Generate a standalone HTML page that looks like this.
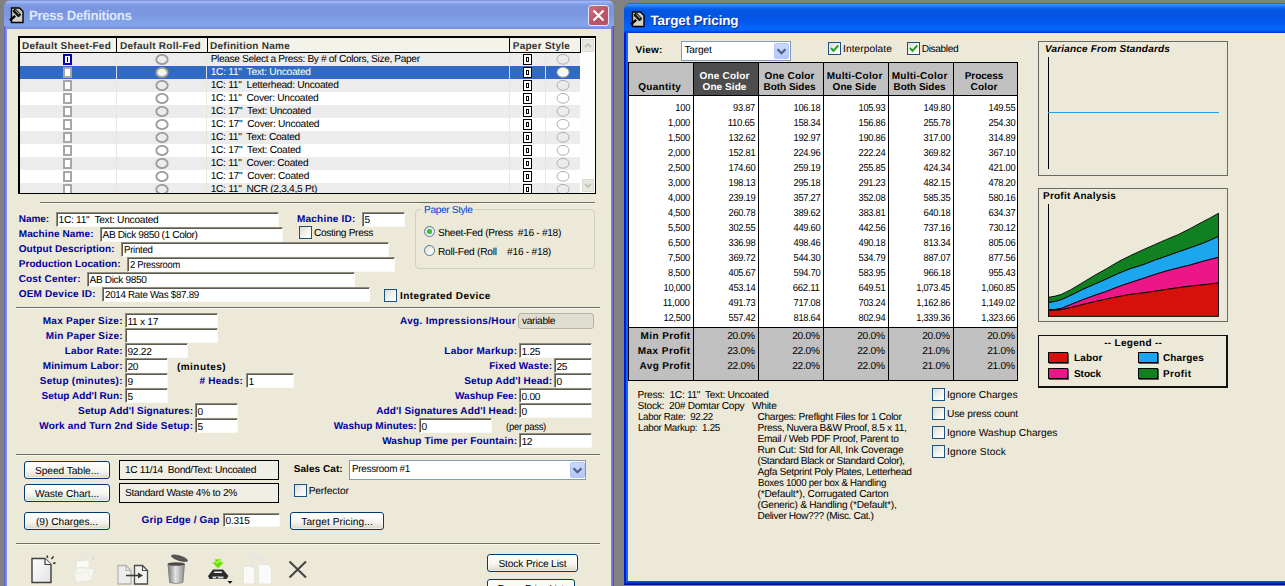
<!DOCTYPE html>
<html><head><meta charset="utf-8"><title>Press Definitions</title>
<style>
html,body{margin:0;padding:0}
body{width:1285px;height:586px;overflow:hidden;background:#818181;position:relative;font-family:'Liberation Sans','DejaVu Sans',sans-serif;font-size:10px;color:#000;text-rendering:geometricPrecision}
div{position:absolute;box-sizing:border-box}
svg{position:absolute;overflow:visible}
.t{white-space:pre}
.r{font-size:10.2px}
.w{font-size:10.2px;color:#fff}
.btn{font-size:10.2px}
.b{font-size:10px;font-weight:bold}
.n{font-size:10px;font-weight:bold;color:#00009c}
.h{font-size:10px;font-weight:bold;color:#333}
.hw{font-size:10px;font-weight:bold;color:#fff}
.bi{font-size:10px;font-weight:bold;font-style:italic}
.t.t13{font-size:13px}
.tt{font-size:13.5px;font-weight:bold}
.inp{background:#fff;border:1px solid;border-color:#8f8d7f #faf9f2 #faf9f2 #8f8d7f;box-shadow:inset 1px 1px 0 #5c5a50}
.xpb{border:1px solid #003c74;border-radius:3px;background:linear-gradient(#fff 0,#f6f5f0 55%,#e4e1d4 88%,#d0cdbf 100%);box-shadow:inset 0 0 0 1px rgba(255,255,255,.6)}
.cb{width:13px;height:13px;border:1px solid #1c5180;background:linear-gradient(135deg,#dcdcd6 0,#f3f3ef 55%,#fff 100%)}
.rd{border:1px solid #52779c;border-radius:50%;background:linear-gradient(135deg,#dcdcd6 0,#f3f3ef 55%,#fff 100%)}
.cmb{background:#fff;border:1px solid #7f9db9}
.cmbb{background:linear-gradient(#cad8fb,#b4c8f6);border:1px solid #b7c6f0;border-radius:2px}
.ln{height:2px;border-top:1px solid #6d6d63;border-bottom:1px solid #f8f7ee}
</style></head>
<body>
<div style="left:4px;top:0px;width:610px;height:600px;background:#7b8fdd;border-radius:7px 7px 0 0"></div>
<div style="left:4px;top:0px;width:610px;height:29px;border-radius:7px 7px 0 0;background:linear-gradient(#6c88d6 0,#a2b6f2 5%,#9cb2f0 8%,#82a2e8 13%,#7b95e0 22%,#7b96e0 50%,#7f9ee5 65%,#82a6ea 88%,#7e98e4 94%,#7884de 100%)"></div>
<div style="left:7px;top:29px;width:604px;height:560px;background:#ece9d8"></div>
<div style="left:4px;top:26px;width:1px;height:580px;background:#6064c4"></div>
<div style="left:5px;top:26px;width:1px;height:580px;background:#7a80dc"></div>
<div style="left:6px;top:26px;width:1px;height:580px;background:#8890e6"></div>
<div style="left:611px;top:26px;width:1px;height:580px;background:#8484e2"></div>
<div style="left:612px;top:26px;width:1px;height:580px;background:#7070d2"></div>
<div style="left:613px;top:26px;width:1px;height:580px;background:#5454b6"></div>
<svg style="left:9px;top:7px" width="15" height="17" viewBox="0 0 15 17"><path d="M2.500 1h8l3.500 3.500v11h-11.500z" fill="#d4d0c8" stroke="#000" stroke-width="1.400"/><g transform="rotate(45 7.900 5.800)"><rect x="3.400" y="3.800" width="9" height="4.200" rx="1.200" fill="#151515"/><rect x="5" y="4.600" width="5.500" height="1" fill="#a8a8a8"/></g><path d="M6.200 8.800l-5.300 4.600" stroke="#000" stroke-width="2.400"/></svg>
<div class="t tt" style="left:28.50px;top:7px;line-height:18px;letter-spacing:-0.300px;transform:scaleX(0.975);transform-origin:0 50%;color:#dfe8fa;font-weight:bold">Press Definitions</div>
<div style="left:588px;top:5px;width:21px;height:21px;border:1px solid #e4e4f4;border-radius:3px;background:linear-gradient(135deg,#cf7080,#bd5568 50%,#b8506a)"></div>
<svg style="left:588px;top:5px" width="21" height="21"><path d="M5.5 5.5l10 10M15.5 5.5l-10 10" stroke="#fff" stroke-width="2.2" stroke-linecap="butt"/></svg>
<div style="left:18px;top:36px;width:578px;height:158px;background:#000"></div>
<div style="left:20px;top:38px;width:575px;height:155px;background:#fff"></div>
<div style="left:20px;top:38px;width:560px;height:14px;background:#f4f3ea"></div>
<div style="left:20px;top:52px;width:561px;height:1px;background:#000"></div>
<div style="left:116px;top:38px;width:1px;height:14px;background:#000"></div>
<div style="left:207px;top:38px;width:1px;height:14px;background:#000"></div>
<div style="left:509px;top:38px;width:1px;height:14px;background:#000"></div>
<div style="left:580px;top:38px;width:1px;height:15px;background:#000"></div>
<div class="t h" style="left:22.00px;top:40px;line-height:14px;letter-spacing:0.234px;">Default Sheet-Fed</div>
<div class="t h" style="left:120.00px;top:40px;line-height:14px;letter-spacing:0.271px;">Default Roll-Fed</div>
<div class="t h" style="left:210.00px;top:40px;line-height:14px;letter-spacing:0.258px;">Definition Name</div>
<div class="t h" style="left:512.70px;top:40px;line-height:14px;letter-spacing:0.274px;">Paper Style</div>
<div style="left:581px;top:38px;width:14px;height:155px;background:#fdfdfb"></div>
<div style="left:582px;top:39px;width:12px;height:13px;background:#e9e8e0;border:1px solid #dcdbd2"></div>
<svg style="left:582px;top:39px" width="12" height="13"><path d="M3 8l3-3 3 3" fill="none" stroke="#c2c1b6" stroke-width="1.8"/></svg>
<div style="left:582px;top:179px;width:12px;height:13px;background:#e9e8e0;border:1px solid #dcdbd2"></div>
<svg style="left:582px;top:179px" width="12" height="13"><path d="M3 5l3 3 3-3" fill="none" stroke="#c2c1b6" stroke-width="1.8"/></svg>
<div style="left:20px;top:53px;width:560px;height:13px;background:#ececec"></div>
<div style="left:116px;top:53px;width:1px;height:13px;background:#e9e6da"></div>
<div style="left:206px;top:53px;width:1px;height:13px;background:#e9e6da"></div>
<div style="left:509px;top:53px;width:1px;height:13px;background:#e9e6da"></div>
<div style="left:545px;top:53px;width:1px;height:13px;background:#e9e6da"></div>
<div style="left:63px;top:54px;width:9px;height:11px;border:2px solid #0000c8;background:#fff"></div>
<div style="left:67px;top:57px;width:1px;height:5px;background:#000"></div>
<svg style="left:155px;top:54px;overflow:hidden" width="14" height="11" viewBox="0 0 14 11"><ellipse cx="7" cy="5.5" rx="5.7" ry="4.6" fill="none" stroke="#9e9e9e" stroke-width="1.9"/></svg>
<div style="left:523px;top:54px;width:9px;height:11px;border:1px solid #000;background:#fff;"></div>
<div style="left:526px;top:57px;width:3px;height:5px;border:1px solid #000;"></div>
<svg style="left:556px;top:54px;overflow:hidden" width="14" height="11" viewBox="0 0 14 11"><ellipse cx="7" cy="5.3" rx="6" ry="4.9" fill="none" stroke="#adadad" stroke-width="1"/></svg>
<div class="t r" style="left:210.70px;top:53px;line-height:14px;letter-spacing:-0.373px;">Please Select a Press: By # of Colors, Size, Paper</div>
<div style="left:20px;top:66px;width:560px;height:13px;background:#316ac5"></div>
<div style="left:116px;top:66px;width:1px;height:13px;background:#d8dcea"></div>
<div style="left:206px;top:66px;width:1px;height:13px;background:#d8dcea"></div>
<div style="left:509px;top:66px;width:1px;height:13px;background:#d8dcea"></div>
<div style="left:545px;top:66px;width:1px;height:13px;background:#d8dcea"></div>
<div style="left:63px;top:67px;width:9px;height:11px;border:2px solid #a6a6a6;background:#fff;"></div>
<svg style="left:155px;top:67px;overflow:hidden" width="14" height="11" viewBox="0 0 14 11"><ellipse cx="7" cy="5.5" rx="5.7" ry="4.6" fill="#f4f4f0" stroke="#9e9e9e" stroke-width="1.9"/></svg>
<div style="left:523px;top:67px;width:9px;height:11px;border:1px solid #000;background:#fff;"></div>
<div style="left:526px;top:70px;width:3px;height:5px;border:1px solid #000;"></div>
<svg style="left:556px;top:67px;overflow:hidden" width="14" height="11" viewBox="0 0 14 11"><ellipse cx="7" cy="5.3" rx="6" ry="4.9" fill="#f8f8f4" stroke="#adadad" stroke-width="1"/></svg>
<div class="t w" style="left:210.70px;top:66px;line-height:14px;letter-spacing:-0.274px;">1C: 11"  Text: Uncoated</div>
<div style="left:20px;top:79px;width:560px;height:13px;background:#ececec"></div>
<div style="left:116px;top:79px;width:1px;height:13px;background:#e9e6da"></div>
<div style="left:206px;top:79px;width:1px;height:13px;background:#e9e6da"></div>
<div style="left:509px;top:79px;width:1px;height:13px;background:#e9e6da"></div>
<div style="left:545px;top:79px;width:1px;height:13px;background:#e9e6da"></div>
<div style="left:63px;top:80px;width:9px;height:11px;border:2px solid #a6a6a6;background:#fff;"></div>
<svg style="left:155px;top:80px;overflow:hidden" width="14" height="11" viewBox="0 0 14 11"><ellipse cx="7" cy="5.5" rx="5.7" ry="4.6" fill="none" stroke="#9e9e9e" stroke-width="1.9"/></svg>
<div style="left:523px;top:80px;width:9px;height:11px;border:1px solid #000;background:#fff;"></div>
<div style="left:526px;top:83px;width:3px;height:5px;border:1px solid #000;"></div>
<svg style="left:556px;top:80px;overflow:hidden" width="14" height="11" viewBox="0 0 14 11"><ellipse cx="7" cy="5.3" rx="6" ry="4.9" fill="none" stroke="#adadad" stroke-width="1"/></svg>
<div class="t r" style="left:210.70px;top:79px;line-height:14px;letter-spacing:-0.300px;">1C: 11"  Letterhead: Uncoated</div>
<div style="left:20px;top:92px;width:560px;height:13px;background:#fff"></div>
<div style="left:116px;top:92px;width:1px;height:13px;background:#e9e6da"></div>
<div style="left:206px;top:92px;width:1px;height:13px;background:#e9e6da"></div>
<div style="left:509px;top:92px;width:1px;height:13px;background:#e9e6da"></div>
<div style="left:545px;top:92px;width:1px;height:13px;background:#e9e6da"></div>
<div style="left:63px;top:93px;width:9px;height:11px;border:2px solid #a6a6a6;background:#fff;"></div>
<svg style="left:155px;top:93px;overflow:hidden" width="14" height="11" viewBox="0 0 14 11"><ellipse cx="7" cy="5.5" rx="5.7" ry="4.6" fill="none" stroke="#9e9e9e" stroke-width="1.9"/></svg>
<div style="left:523px;top:93px;width:9px;height:11px;border:1px solid #000;background:#fff;"></div>
<div style="left:526px;top:96px;width:3px;height:5px;border:1px solid #000;"></div>
<svg style="left:556px;top:93px;overflow:hidden" width="14" height="11" viewBox="0 0 14 11"><ellipse cx="7" cy="5.3" rx="6" ry="4.9" fill="none" stroke="#adadad" stroke-width="1"/></svg>
<div class="t r" style="left:210.70px;top:92px;line-height:14px;letter-spacing:-0.300px;">1C: 11"  Cover: Uncoated</div>
<div style="left:20px;top:105px;width:560px;height:13px;background:#ececec"></div>
<div style="left:116px;top:105px;width:1px;height:13px;background:#e9e6da"></div>
<div style="left:206px;top:105px;width:1px;height:13px;background:#e9e6da"></div>
<div style="left:509px;top:105px;width:1px;height:13px;background:#e9e6da"></div>
<div style="left:545px;top:105px;width:1px;height:13px;background:#e9e6da"></div>
<div style="left:63px;top:106px;width:9px;height:11px;border:2px solid #a6a6a6;background:#fff;"></div>
<svg style="left:155px;top:106px;overflow:hidden" width="14" height="11" viewBox="0 0 14 11"><ellipse cx="7" cy="5.5" rx="5.7" ry="4.6" fill="none" stroke="#9e9e9e" stroke-width="1.9"/></svg>
<div style="left:523px;top:106px;width:9px;height:11px;border:1px solid #000;background:#fff;"></div>
<div style="left:526px;top:109px;width:3px;height:5px;border:1px solid #000;"></div>
<svg style="left:556px;top:106px;overflow:hidden" width="14" height="11" viewBox="0 0 14 11"><ellipse cx="7" cy="5.3" rx="6" ry="4.9" fill="none" stroke="#adadad" stroke-width="1"/></svg>
<div class="t r" style="left:210.70px;top:105px;line-height:14px;letter-spacing:-0.300px;">1C: 17"  Text: Uncoated</div>
<div style="left:20px;top:118px;width:560px;height:13px;background:#fff"></div>
<div style="left:116px;top:118px;width:1px;height:13px;background:#e9e6da"></div>
<div style="left:206px;top:118px;width:1px;height:13px;background:#e9e6da"></div>
<div style="left:509px;top:118px;width:1px;height:13px;background:#e9e6da"></div>
<div style="left:545px;top:118px;width:1px;height:13px;background:#e9e6da"></div>
<div style="left:63px;top:119px;width:9px;height:11px;border:2px solid #a6a6a6;background:#fff;"></div>
<svg style="left:155px;top:119px;overflow:hidden" width="14" height="11" viewBox="0 0 14 11"><ellipse cx="7" cy="5.5" rx="5.7" ry="4.6" fill="none" stroke="#9e9e9e" stroke-width="1.9"/></svg>
<div style="left:523px;top:119px;width:9px;height:11px;border:1px solid #000;background:#fff;"></div>
<div style="left:526px;top:122px;width:3px;height:5px;border:1px solid #000;"></div>
<svg style="left:556px;top:119px;overflow:hidden" width="14" height="11" viewBox="0 0 14 11"><ellipse cx="7" cy="5.3" rx="6" ry="4.9" fill="none" stroke="#adadad" stroke-width="1"/></svg>
<div class="t r" style="left:210.70px;top:118px;line-height:14px;letter-spacing:-0.300px;">1C: 17"  Cover: Uncoated</div>
<div style="left:20px;top:131px;width:560px;height:13px;background:#ececec"></div>
<div style="left:116px;top:131px;width:1px;height:13px;background:#e9e6da"></div>
<div style="left:206px;top:131px;width:1px;height:13px;background:#e9e6da"></div>
<div style="left:509px;top:131px;width:1px;height:13px;background:#e9e6da"></div>
<div style="left:545px;top:131px;width:1px;height:13px;background:#e9e6da"></div>
<div style="left:63px;top:132px;width:9px;height:11px;border:2px solid #a6a6a6;background:#fff;"></div>
<svg style="left:155px;top:132px;overflow:hidden" width="14" height="11" viewBox="0 0 14 11"><ellipse cx="7" cy="5.5" rx="5.7" ry="4.6" fill="none" stroke="#9e9e9e" stroke-width="1.9"/></svg>
<div style="left:523px;top:132px;width:9px;height:11px;border:1px solid #000;background:#fff;"></div>
<div style="left:526px;top:135px;width:3px;height:5px;border:1px solid #000;"></div>
<svg style="left:556px;top:132px;overflow:hidden" width="14" height="11" viewBox="0 0 14 11"><ellipse cx="7" cy="5.3" rx="6" ry="4.9" fill="none" stroke="#adadad" stroke-width="1"/></svg>
<div class="t r" style="left:210.70px;top:131px;line-height:14px;letter-spacing:-0.300px;">1C: 11"  Text: Coated</div>
<div style="left:20px;top:144px;width:560px;height:13px;background:#fff"></div>
<div style="left:116px;top:144px;width:1px;height:13px;background:#e9e6da"></div>
<div style="left:206px;top:144px;width:1px;height:13px;background:#e9e6da"></div>
<div style="left:509px;top:144px;width:1px;height:13px;background:#e9e6da"></div>
<div style="left:545px;top:144px;width:1px;height:13px;background:#e9e6da"></div>
<div style="left:63px;top:145px;width:9px;height:11px;border:2px solid #a6a6a6;background:#fff;"></div>
<svg style="left:155px;top:145px;overflow:hidden" width="14" height="11" viewBox="0 0 14 11"><ellipse cx="7" cy="5.5" rx="5.7" ry="4.6" fill="none" stroke="#9e9e9e" stroke-width="1.9"/></svg>
<div style="left:523px;top:145px;width:9px;height:11px;border:1px solid #000;background:#fff;"></div>
<div style="left:526px;top:148px;width:3px;height:5px;border:1px solid #000;"></div>
<svg style="left:556px;top:145px;overflow:hidden" width="14" height="11" viewBox="0 0 14 11"><ellipse cx="7" cy="5.3" rx="6" ry="4.9" fill="none" stroke="#adadad" stroke-width="1"/></svg>
<div class="t r" style="left:210.70px;top:144px;line-height:14px;letter-spacing:-0.300px;">1C: 17"  Text: Coated</div>
<div style="left:20px;top:157px;width:560px;height:13px;background:#ececec"></div>
<div style="left:116px;top:157px;width:1px;height:13px;background:#e9e6da"></div>
<div style="left:206px;top:157px;width:1px;height:13px;background:#e9e6da"></div>
<div style="left:509px;top:157px;width:1px;height:13px;background:#e9e6da"></div>
<div style="left:545px;top:157px;width:1px;height:13px;background:#e9e6da"></div>
<div style="left:63px;top:158px;width:9px;height:11px;border:2px solid #a6a6a6;background:#fff;"></div>
<svg style="left:155px;top:158px;overflow:hidden" width="14" height="11" viewBox="0 0 14 11"><ellipse cx="7" cy="5.5" rx="5.7" ry="4.6" fill="none" stroke="#9e9e9e" stroke-width="1.9"/></svg>
<div style="left:523px;top:158px;width:9px;height:11px;border:1px solid #000;background:#fff;"></div>
<div style="left:526px;top:161px;width:3px;height:5px;border:1px solid #000;"></div>
<svg style="left:556px;top:158px;overflow:hidden" width="14" height="11" viewBox="0 0 14 11"><ellipse cx="7" cy="5.3" rx="6" ry="4.9" fill="none" stroke="#adadad" stroke-width="1"/></svg>
<div class="t r" style="left:210.70px;top:157px;line-height:14px;letter-spacing:-0.300px;">1C: 11"  Cover: Coated</div>
<div style="left:20px;top:170px;width:560px;height:13px;background:#fff"></div>
<div style="left:116px;top:170px;width:1px;height:13px;background:#e9e6da"></div>
<div style="left:206px;top:170px;width:1px;height:13px;background:#e9e6da"></div>
<div style="left:509px;top:170px;width:1px;height:13px;background:#e9e6da"></div>
<div style="left:545px;top:170px;width:1px;height:13px;background:#e9e6da"></div>
<div style="left:63px;top:171px;width:9px;height:11px;border:2px solid #a6a6a6;background:#fff;"></div>
<svg style="left:155px;top:171px;overflow:hidden" width="14" height="11" viewBox="0 0 14 11"><ellipse cx="7" cy="5.5" rx="5.7" ry="4.6" fill="none" stroke="#9e9e9e" stroke-width="1.9"/></svg>
<div style="left:523px;top:171px;width:9px;height:11px;border:1px solid #000;background:#fff;"></div>
<div style="left:526px;top:174px;width:3px;height:5px;border:1px solid #000;"></div>
<svg style="left:556px;top:171px;overflow:hidden" width="14" height="11" viewBox="0 0 14 11"><ellipse cx="7" cy="5.3" rx="6" ry="4.9" fill="none" stroke="#adadad" stroke-width="1"/></svg>
<div class="t r" style="left:210.70px;top:170px;line-height:14px;letter-spacing:-0.300px;">1C: 17"  Cover: Coated</div>
<div style="left:20px;top:183px;width:560px;height:10px;background:#ececec"></div>
<div style="left:116px;top:183px;width:1px;height:10px;background:#e9e6da"></div>
<div style="left:206px;top:183px;width:1px;height:10px;background:#e9e6da"></div>
<div style="left:509px;top:183px;width:1px;height:10px;background:#e9e6da"></div>
<div style="left:545px;top:183px;width:1px;height:10px;background:#e9e6da"></div>
<div style="left:63px;top:184px;width:9px;height:9px;border:2px solid #a6a6a6;background:#fff;border-bottom:none;"></div>
<svg style="left:155px;top:184px;overflow:hidden" width="14" height="9" viewBox="0 0 14 9"><ellipse cx="7" cy="5.5" rx="5.7" ry="4.6" fill="none" stroke="#9e9e9e" stroke-width="1.9"/></svg>
<div style="left:523px;top:184px;width:9px;height:9px;border:1px solid #000;background:#fff;border-bottom:none;"></div>
<div style="left:526px;top:187px;width:3px;height:5px;border:1px solid #000;"></div>
<svg style="left:556px;top:184px;overflow:hidden" width="14" height="9" viewBox="0 0 14 9"><ellipse cx="7" cy="5.3" rx="6" ry="4.9" fill="none" stroke="#adadad" stroke-width="1"/></svg>
<div style="left:208px;top:183px;width:300px;height:10px;overflow:hidden"><div class="t r" style="left:2.7px;top:0px;line-height:14px;letter-spacing:-0.3px">1C: 11"  NCR (2,3,4,5 Pt)</div></div>
<div class="ln" style="left:40px;top:202px;width:555px;height:2px;"></div>
<div class="ln" style="left:16px;top:307px;width:584px;height:2px;"></div>
<div class="ln" style="left:16px;top:454px;width:584px;height:2px;"></div>
<div class="ln" style="left:16px;top:543px;width:584px;height:2px;"></div>
<div class="t n" style="left:18.70px;top:213px;line-height:14px;letter-spacing:-0.016px;">Name:</div>
<div class="inp" style="left:56px;top:212px;width:223px;height:15px;"></div>
<div class="t r" style="left:58.50px;top:214px;line-height:14px;letter-spacing:-0.274px;">1C: 11"  Text: Uncoated</div>
<div class="t n" style="left:18.70px;top:228px;line-height:14px;letter-spacing:0.126px;">Machine Name:</div>
<div class="inp" style="left:100px;top:227px;width:183px;height:15px;"></div>
<div class="t r" style="left:102.50px;top:229px;line-height:14px;letter-spacing:-0.418px;">AB Dick 9850 (1 Color)</div>
<div class="t n" style="left:18.70px;top:243px;line-height:14px;letter-spacing:0.111px;">Output Description:</div>
<div class="inp" style="left:121px;top:242px;width:268px;height:15px;"></div>
<div class="t r" style="left:123.50px;top:244px;line-height:14px;letter-spacing:-0.300px;transform:scaleX(0.951);transform-origin:0 50%;">Printed</div>
<div class="t n" style="left:18.70px;top:258px;line-height:14px;letter-spacing:0.073px;">Production Location:</div>
<div class="inp" style="left:127px;top:257px;width:268px;height:15px;"></div>
<div class="t r" style="left:129.50px;top:259px;line-height:14px;letter-spacing:-0.300px;transform:scaleX(0.918);transform-origin:0 50%;">2 Pressroom</div>
<div class="t n" style="left:18.70px;top:273px;line-height:14px;letter-spacing:0.165px;">Cost Center:</div>
<div class="inp" style="left:87px;top:272px;width:268px;height:15px;"></div>
<div class="t r" style="left:89.50px;top:274px;line-height:14px;letter-spacing:-0.395px;">AB Dick 9850</div>
<div class="t n" style="left:18.70px;top:288px;line-height:14px;letter-spacing:0.220px;">OEM Device ID:</div>
<div class="inp" style="left:102px;top:287px;width:268px;height:15px;"></div>
<div class="t r" style="left:104.50px;top:289px;line-height:14px;letter-spacing:-0.300px;transform:scaleX(0.961);transform-origin:0 50%;">2014 Rate Was $87.89</div>
<div class="t n" style="left:297.00px;top:213px;line-height:14px;letter-spacing:0.216px;">Machine ID:</div>
<div class="inp" style="left:362px;top:212px;width:43px;height:15px;"></div>
<div class="t r" style="left:364.50px;top:214px;line-height:14px;letter-spacing:-0.300px;">5</div>
<div class="cb" style="left:299px;top:226px;width:13px;height:13px;"></div>
<div class="t r" style="left:314.00px;top:227px;line-height:14px;letter-spacing:-0.340px;">Costing Press</div>
<div class="cb" style="left:384px;top:289px;width:13px;height:13px;"></div>
<div class="t b" style="left:400.00px;top:290px;line-height:14px;letter-spacing:0.431px;">Integrated Device</div>
<div style="left:415px;top:209px;width:180px;height:60px;border:1px solid #d0d0bf;border-radius:4px"></div>
<div style="left:421px;top:203px;width:54px;height:12px;background:#ece9d8"></div>
<div class="t r" style="left:424.00px;top:204px;line-height:14px;letter-spacing:-0.379px;color:#0046d5">Paper Style</div>
<div class="rd" style="left:424px;top:226px;width:11px;height:11px;"></div>
<div style="left:427px;top:229px;width:5px;height:5px;border-radius:50%;background:radial-gradient(#3fd03f,#22a022)"></div>
<div class="t r" style="left:438.00px;top:227px;line-height:14px;letter-spacing:-0.319px;">Sheet-Fed (Press  #16 - #18)</div>
<div class="rd" style="left:424px;top:245px;width:11px;height:11px;"></div>
<div class="t r" style="left:438.00px;top:246px;line-height:14px;letter-spacing:-0.252px;">Roll-Fed (Roll    #16 - #18)</div>
<div class="t n" style="left:42.76px;top:315px;line-height:14px;letter-spacing:0.256px;">Max Paper Size:</div>
<div class="inp" style="left:125px;top:313px;width:93px;height:15px;"></div>
<div class="t r" style="left:127.50px;top:316px;line-height:14px;letter-spacing:-0.300px;">11 x 17</div>
<div class="t n" style="left:45.71px;top:330px;line-height:14px;letter-spacing:0.206px;">Min Paper Size:</div>
<div class="inp" style="left:125px;top:328px;width:93px;height:15px;"></div>
<div class="t n" style="left:64.72px;top:345px;line-height:14px;letter-spacing:0.222px;">Labor Rate:</div>
<div class="inp" style="left:125px;top:343px;width:63px;height:15px;"></div>
<div class="t r" style="left:127.50px;top:346px;line-height:14px;letter-spacing:-0.300px;">92.22</div>
<div class="t n" style="left:42.66px;top:360px;line-height:14px;letter-spacing:0.158px;">Minimum Labor:</div>
<div class="inp" style="left:125px;top:358px;width:43px;height:15px;"></div>
<div class="t r" style="left:127.50px;top:361px;line-height:14px;letter-spacing:-0.300px;">20</div>
<div class="t b" style="left:177.00px;top:361px;line-height:14px;letter-spacing:0.444px;">(minutes)</div>
<div class="t n" style="left:39.76px;top:375px;line-height:14px;letter-spacing:0.257px;">Setup (minutes):</div>
<div class="inp" style="left:125px;top:373px;width:43px;height:15px;"></div>
<div class="t r" style="left:127.50px;top:376px;line-height:14px;letter-spacing:-0.300px;">9</div>
<div class="t n" style="left:199.50px;top:375px;line-height:14px;letter-spacing:0.227px;"># Heads:</div>
<div class="inp" style="left:246px;top:373px;width:48px;height:15px;"></div>
<div class="t r" style="left:248.50px;top:376px;line-height:14px;letter-spacing:-0.300px;">1</div>
<div class="t n" style="left:41.54px;top:390px;line-height:14px;letter-spacing:0.042px;">Setup Add'l Run:</div>
<div class="inp" style="left:125px;top:388px;width:43px;height:15px;"></div>
<div class="t r" style="left:127.50px;top:391px;line-height:14px;letter-spacing:-0.300px;">5</div>
<div class="t n" style="left:78.11px;top:405px;line-height:14px;letter-spacing:0.105px;">Setup Add'l Signatures:</div>
<div class="inp" style="left:195px;top:403px;width:43px;height:15px;"></div>
<div class="t r" style="left:197.50px;top:406px;line-height:14px;letter-spacing:-0.300px;">0</div>
<div class="t n" style="left:39.21px;top:420px;line-height:14px;letter-spacing:0.208px;">Work and Turn 2nd Side Setup:</div>
<div class="inp" style="left:195px;top:418px;width:43px;height:15px;"></div>
<div class="t r" style="left:197.50px;top:421px;line-height:14px;letter-spacing:-0.300px;">5</div>
<div class="t n" style="left:400.00px;top:315px;line-height:14px;letter-spacing:0.328px;">Avg. Impressions/Hour</div>
<div style="left:518px;top:313px;width:76px;height:16px;border:1px solid #b5b3a6;border-radius:3px;background:#dfddd0"></div>
<div class="t r" style="left:522.00px;top:315px;line-height:14px;letter-spacing:-0.336px;">variable</div>
<div class="t n" style="left:444.27px;top:345px;line-height:14px;letter-spacing:0.273px;">Labor Markup:</div>
<div class="inp" style="left:519px;top:343px;width:73px;height:15px;"></div>
<div class="t r" style="left:521.50px;top:346px;line-height:14px;letter-spacing:-0.300px;">1.25</div>
<div class="t n" style="left:489.14px;top:360px;line-height:14px;letter-spacing:0.141px;">Fixed Waste:</div>
<div class="inp" style="left:554px;top:358px;width:38px;height:15px;"></div>
<div class="t r" style="left:556.50px;top:361px;line-height:14px;letter-spacing:-0.300px;">25</div>
<div class="t n" style="left:464.16px;top:375px;line-height:14px;letter-spacing:0.156px;">Setup Add'l Head:</div>
<div class="inp" style="left:554px;top:373px;width:38px;height:15px;"></div>
<div class="t r" style="left:556.50px;top:376px;line-height:14px;letter-spacing:-0.300px;">0</div>
<div class="t n" style="left:455.01px;top:390px;line-height:14px;letter-spacing:0.013px;">Washup Fee:</div>
<div class="inp" style="left:519px;top:388px;width:73px;height:15px;"></div>
<div class="t r" style="left:521.50px;top:391px;line-height:14px;letter-spacing:-0.300px;">0.00</div>
<div class="t n" style="left:376.16px;top:405px;line-height:14px;letter-spacing:0.156px;">Add'l Signatures Add'l Head:</div>
<div class="inp" style="left:519px;top:403px;width:73px;height:15px;"></div>
<div class="t r" style="left:521.50px;top:406px;line-height:14px;letter-spacing:-0.300px;">0</div>
<div class="t n" style="left:333.74px;top:420px;line-height:14px;letter-spacing:0.040px;">Washup Minutes:</div>
<div class="inp" style="left:419px;top:418px;width:73px;height:15px;"></div>
<div class="t r" style="left:421.50px;top:421px;line-height:14px;letter-spacing:-0.300px;">0</div>
<div class="t r" style="left:506.00px;top:421px;line-height:14px;letter-spacing:-0.300px;transform:scaleX(0.933);transform-origin:0 50%;">(per pass)</div>
<div class="t n" style="left:382.15px;top:435px;line-height:14px;letter-spacing:0.155px;">Washup Time per Fountain:</div>
<div class="inp" style="left:519px;top:433px;width:73px;height:15px;"></div>
<div class="t r" style="left:521.50px;top:436px;line-height:14px;letter-spacing:-0.300px;">12</div>
<div class="xpb" style="left:24px;top:461px;width:86px;height:18px;"></div>
<div class="t btn" style="left:34.97px;top:465px;line-height:14px;letter-spacing:-0.068px;">Speed Table...</div>
<div class="xpb" style="left:24px;top:484px;width:86px;height:18px;"></div>
<div class="t btn" style="left:34.97px;top:488px;line-height:14px;letter-spacing:-0.052px;">Waste Chart...</div>
<div class="xpb" style="left:24px;top:512px;width:86px;height:18px;"></div>
<div class="t btn" style="left:35.99px;top:516px;line-height:14px;letter-spacing:-0.020px;">(9) Charges...</div>
<div style="left:119px;top:460px;width:160px;height:20px;border:1px solid #000;background:#f0efe6"></div>
<div class="t r" style="left:125.00px;top:464px;line-height:14px;letter-spacing:-0.339px;">1C 11/14  Bond/Text: Uncoated</div>
<div style="left:119px;top:483px;width:160px;height:20px;border:1px solid #000;background:#f0efe6"></div>
<div class="t r" style="left:125.00px;top:487px;line-height:14px;letter-spacing:-0.309px;">Standard Waste 4% to 2%</div>
<div class="t n" style="left:141.50px;top:514px;line-height:14px;letter-spacing:0.161px;">Grip Edge / Gap</div>
<div class="inp" style="left:223px;top:513px;width:57px;height:14px;"></div>
<div class="t r" style="left:225.50px;top:515px;line-height:14px;letter-spacing:-0.300px;">0.315</div>
<div class="t b" style="left:293.70px;top:463px;line-height:14px;letter-spacing:0.064px;">Sales Cat:</div>
<div class="cmb" style="left:349px;top:460px;width:237px;height:20px;"></div>
<div class="t r" style="left:352.00px;top:463px;line-height:14px;letter-spacing:-0.300px;transform:scaleX(0.970);transform-origin:0 50%;">Pressroom #1</div>
<div class="cmbb" style="left:570px;top:462px;width:15px;height:16px;"></div>
<svg style="left:569px;top:461.5px" width="17" height="17"><path d="M4.500 6.200l4 4 4-4" fill="none" stroke="#4d6185" stroke-width="2.200"/></svg>
<div class="cb" style="left:294px;top:484px;width:13px;height:13px;"></div>
<div class="t r" style="left:308.70px;top:485px;line-height:14px;letter-spacing:-0.149px;">Perfector</div>
<div class="xpb" style="left:290px;top:512px;width:94px;height:18px;"></div>
<div class="t btn" style="left:301.27px;top:516px;line-height:14px;letter-spacing:0.042px;">Target Pricing...</div>
<div class="xpb" style="left:487px;top:554px;width:91px;height:18px;"></div>
<div class="t btn" style="left:498.43px;top:558px;line-height:14px;letter-spacing:-0.139px;">Stock Price List</div>
<div class="xpb" style="left:487px;top:579px;width:88px;height:18px;"></div>
<div class="t btn" style="left:497.85px;top:583px;line-height:14px;letter-spacing:-0.298px;">Press Price List</div>

<svg style="left:28px;top:552px" width="32" height="34" viewBox="0 0 32 34">
 <defs><linearGradient id="pg" x1="0" y1="0" x2="1" y2="1"><stop offset="0" stop-color="#fff"/><stop offset="1" stop-color="#e2e2e2"/></linearGradient></defs>
 <path d="M4 6.5h13l6 6v18h-19z" fill="url(#pg)" stroke="#3c3c3c" stroke-width="1.4"/>
 <path d="M17 6.5v6h6" fill="#f4f4f4" stroke="#3c3c3c" stroke-width="1.2"/>
 <path d="M19 3.5l.6 2.4M23.5 7l2-2.6M25 11.5l2.6-.8" stroke="#333" stroke-width="1.5"/>
</svg>
<svg style="left:70px;top:554px" width="30" height="32" viewBox="0 0 30 32">
 <path d="M6 7.200l12.500-1.300 1.200 7.500-13 1.300z" fill="#fafaf7" stroke="#e6e5dc" stroke-width=".8"/>
 <path d="M3.500 19.600l5-6.200 16.200 1.300-3.100 11.800-15.600 1.900z" fill="#f6f6f1" stroke="#e3e2d9" stroke-width=".9"/>
 <path d="M3.500 19.600l14.500-1.500 3.600 8.400" fill="none" stroke="#e9e8e0" stroke-width=".8"/>
 <path d="M22.500 3l2 .6-.6 2-2-.6z" fill="#cfd8e6"/>
</svg>
<svg style="left:115px;top:562px" width="36" height="24" viewBox="0 0 36 24">
 <path d="M3 3.500h8l5 5v13.500h-13z" fill="#ededed" stroke="#b4b4b4" stroke-width="1.3"/>
 <path d="M11 3.500v5h5" fill="none" stroke="#b4b4b4" stroke-width="1.1"/>
 <path d="M19.500 3.500h8l5 5v13.500h-13z" fill="#f2f2f2" stroke="#4a4a4a" stroke-width="1.3"/>
 <path d="M27.500 3.500v5h5" fill="none" stroke="#4a4a4a" stroke-width="1.1"/>
 <path d="M11 13.500h13" stroke="#3a3a3a" stroke-width="1.6"/><path d="M23 10.500l5 3-5 3z" fill="#3a3a3a"/>
</svg>
<svg style="left:164px;top:552px" width="28" height="34" viewBox="0 0 28 34">
 <defs><linearGradient id="tg" x1="0" y1="0" x2="1" y2="0"><stop offset="0" stop-color="#7a7a7a"/><stop offset=".45" stop-color="#e4e4e4"/><stop offset="1" stop-color="#8a8a8a"/></linearGradient></defs>
 <path d="M4 12h16.500l-1.600 18.500q-6.600 2-13.300 0z" fill="url(#tg)" stroke="#777" stroke-width=".8"/>
 <ellipse cx="12.200" cy="12" rx="8.600" ry="1.800" fill="#4a4a4a"/>
 <ellipse cx="15.500" cy="6.200" rx="8.400" ry="2.300" transform="rotate(17 15.500 6.200)" fill="#555" stroke="#3c3c3c" stroke-width=".6"/>
</svg>
<svg style="left:206px;top:556px" width="28" height="30" viewBox="0 0 28 30">
 <path d="M9.300 3.300h5.400v3.200h2.800l-5.500 5.800-5.500-5.800h2.800z" fill="#6ee000" stroke="#8cf02c" stroke-width=".6"/>
 <path d="M10.300 7l3.600-2.400" stroke="#c8ff88" stroke-width="1.200"/>
 <path d="M7 13.500h10l5.500 6.500-2 3h-17l-1.500-3z" fill="#2c2c2c"/>
 <path d="M8.500 15.500h7l.8 1.500h-8.600z" fill="#f4f4f4"/>
 <path d="M6.500 20.500h11v2h-11z" fill="#d8d8d8"/>
 <path d="M10 21h1.800v1.300h-1.800z" fill="#222"/>
 <path d="M21.500 25h5l-2.500 2.700z" fill="#000"/>
</svg>
<svg style="left:241px;top:554px" width="34" height="32" viewBox="0 0 34 32">
 <path d="M2.500 12.500h8l3 3v14.500h-11z" fill="#fafafa" stroke="#e6e5de" stroke-width="1"/>
 <path d="M17.500 10.500h9l4 4v15.500h-13z" fill="#fafafa" stroke="#e6e5de" stroke-width="1"/>
 <path d="M11 14v-10h11" fill="none" stroke="#e2e4ea" stroke-width="1.500"/>
</svg>
<svg style="left:287px;top:559px" width="22" height="22" viewBox="0 0 22 22">
 <path d="M2.500 2.500l16.500 16M19 2.500l-16.500 16" stroke="#454545" stroke-width="2.100"/>
</svg>

<div style="left:624px;top:3px;width:700px;height:582px;background:linear-gradient(#0831d9 0,#0831d9 99.2%,#001ea0 100%);border-radius:8px 0 0 0"></div>
<div style="left:624px;top:30px;width:2px;height:552px;background:#0019d6"></div>
<div style="left:626px;top:30px;width:2px;height:552px;background:#1764f0"></div>
<div style="left:626px;top:581px;width:700px;height:1px;background:#0e4cf0"></div>
<div style="left:624px;top:582px;width:700px;height:1px;background:#0834e0"></div>
<div style="left:624px;top:583px;width:700px;height:1px;background:#0020c0"></div>
<div style="left:624px;top:584px;width:700px;height:1px;background:#001494"></div>
<div style="left:624px;top:3px;width:700px;height:30px;border-radius:8px 0 0 0;background:linear-gradient(#0a58d8 0,#3c8cff 4%,#348afc 8%,#1070f8 13%,#0458e4 22%,#0454e0 38%,#0458ec 60%,#0464fc 82%,#0262fa 91%,#0048dc 96%,#0036c4 100%)"></div>
<div style="left:628px;top:33px;width:700px;height:548px;background:#ece9d8"></div>
<svg style="left:630px;top:11px" width="15" height="17" viewBox="0 0 15 17"><path d="M2.500 1h8l3.500 3.500v11h-11.500z" fill="#d4d0c8" stroke="#000" stroke-width="1.400"/><g transform="rotate(45 7.900 5.800)"><rect x="3.400" y="3.800" width="9" height="4.200" rx="1.200" fill="#151515"/><rect x="5" y="4.600" width="5.500" height="1" fill="#a8a8a8"/></g><path d="M6.200 8.800l-5.300 4.600" stroke="#000" stroke-width="2.400"/></svg>
<div class="t tt" style="left:650.50px;top:12px;line-height:18px;letter-spacing:-0.127px;color:#fff;font-weight:bold;text-shadow:1px 1px 0 #0a2a90">Target Pricing</div>
<div class="t b" style="left:635.50px;top:44px;line-height:14px;letter-spacing:0.212px;">View:</div>
<div class="cmb" style="left:681px;top:41px;width:110px;height:20px;"></div>
<div class="t r" style="left:684.50px;top:44px;line-height:14px;letter-spacing:-0.221px;">Target</div>
<div class="cmbb" style="left:774px;top:43px;width:15px;height:16px;"></div>
<svg style="left:773px;top:42.5px" width="17" height="17"><path d="M4.500 6.200l4 4 4-4" fill="none" stroke="#4d6185" stroke-width="2.200"/></svg>
<div class="cb" style="left:828px;top:42px;width:13px;height:13px;"></div>
<svg style="left:828px;top:42px" width="13" height="13"><path d="M3 6l2.500 2.800 4.700-5.300" fill="none" stroke="#21a121" stroke-width="2"/></svg>
<div class="t r" style="left:843.00px;top:43px;line-height:14px;letter-spacing:0.077px;">Interpolate</div>
<div class="cb" style="left:907px;top:42px;width:13px;height:13px;"></div>
<svg style="left:907px;top:42px" width="13" height="13"><path d="M3 6l2.500 2.800 4.700-5.300" fill="none" stroke="#21a121" stroke-width="2"/></svg>
<div class="t r" style="left:921.70px;top:43px;line-height:14px;letter-spacing:-0.395px;">Disabled</div>
<div style="left:628px;top:62px;width:390px;height:319px;background:#000"></div>
<div style="left:629px;top:63px;width:64px;height:32px;background:#c0c0c0"></div>
<div style="left:629px;top:96px;width:64px;height:231px;background:#fff"></div>
<div style="left:629px;top:328px;width:64px;height:52px;background:#c0c0c0"></div>
<div class="t b" style="left:638.15px;top:81px;line-height:14px;letter-spacing:0.305px;">Quantity</div>
<div style="left:694px;top:63px;width:64px;height:32px;background:#4d4d4d"></div>
<div style="left:694px;top:96px;width:64px;height:231px;background:#fff"></div>
<div style="left:694px;top:328px;width:64px;height:52px;background:#c0c0c0"></div>
<div class="t hw" style="left:699.59px;top:70px;line-height:14px;letter-spacing:0.184px;">One Color</div>
<div class="t hw" style="left:702.54px;top:81px;line-height:14px;letter-spacing:0.080px;">One Side</div>
<div style="left:759px;top:63px;width:64px;height:32px;background:#c0c0c0"></div>
<div style="left:759px;top:96px;width:64px;height:231px;background:#fff"></div>
<div style="left:759px;top:328px;width:64px;height:52px;background:#c0c0c0"></div>
<div class="t b" style="left:764.59px;top:70px;line-height:14px;letter-spacing:0.184px;">One Color</div>
<div class="t b" style="left:763.49px;top:81px;line-height:14px;letter-spacing:-0.023px;">Both Sides</div>
<div style="left:824px;top:63px;width:64px;height:32px;background:#c0c0c0"></div>
<div style="left:824px;top:96px;width:64px;height:231px;background:#fff"></div>
<div style="left:824px;top:328px;width:64px;height:52px;background:#c0c0c0"></div>
<div class="t b" style="left:826.65px;top:70px;line-height:14px;letter-spacing:0.294px;">Multi-Color</div>
<div class="t b" style="left:832.54px;top:81px;line-height:14px;letter-spacing:0.080px;">One Side</div>
<div style="left:889px;top:63px;width:64px;height:32px;background:#c0c0c0"></div>
<div style="left:889px;top:96px;width:64px;height:231px;background:#fff"></div>
<div style="left:889px;top:328px;width:64px;height:52px;background:#c0c0c0"></div>
<div class="t b" style="left:891.65px;top:70px;line-height:14px;letter-spacing:0.294px;">Multi-Color</div>
<div class="t b" style="left:893.49px;top:81px;line-height:14px;letter-spacing:-0.023px;">Both Sides</div>
<div style="left:954px;top:63px;width:63px;height:32px;background:#c0c0c0"></div>
<div style="left:954px;top:96px;width:63px;height:231px;background:#fff"></div>
<div style="left:954px;top:328px;width:63px;height:52px;background:#c0c0c0"></div>
<div class="t b" style="left:964.72px;top:70px;line-height:14px;letter-spacing:-0.060px;">Process</div>
<div class="t b" style="left:970.59px;top:81px;line-height:14px;letter-spacing:0.178px;">Color</div>
<div class="t r" style="left:673.92px;top:102px;line-height:14px;letter-spacing:-0.300px;transform:scaleX(0.919);transform-origin:100% 50%;">100</div>
<div class="t r" style="left:731.03px;top:102px;line-height:14px;letter-spacing:-0.300px;transform:scaleX(0.913);transform-origin:100% 50%;">93.87</div>
<div class="t r" style="left:790.65px;top:102px;line-height:14px;letter-spacing:-0.300px;transform:scaleX(0.914);transform-origin:100% 50%;">106.18</div>
<div class="t r" style="left:855.65px;top:102px;line-height:14px;letter-spacing:-0.300px;transform:scaleX(0.914);transform-origin:100% 50%;">105.93</div>
<div class="t r" style="left:920.65px;top:102px;line-height:14px;letter-spacing:-0.300px;transform:scaleX(0.914);transform-origin:100% 50%;">149.80</div>
<div class="t r" style="left:985.65px;top:102px;line-height:14px;letter-spacing:-0.300px;transform:scaleX(0.914);transform-origin:100% 50%;">149.55</div>
<div class="t r" style="left:666.03px;top:117px;line-height:14px;letter-spacing:-0.300px;transform:scaleX(0.913);transform-origin:100% 50%;">1,000</div>
<div class="t r" style="left:726.41px;top:117px;line-height:14px;letter-spacing:-0.300px;transform:scaleX(0.939);transform-origin:100% 50%;">110.65</div>
<div class="t r" style="left:790.65px;top:117px;line-height:14px;letter-spacing:-0.300px;transform:scaleX(0.914);transform-origin:100% 50%;">158.34</div>
<div class="t r" style="left:855.65px;top:117px;line-height:14px;letter-spacing:-0.300px;transform:scaleX(0.914);transform-origin:100% 50%;">156.86</div>
<div class="t r" style="left:920.65px;top:117px;line-height:14px;letter-spacing:-0.300px;transform:scaleX(0.914);transform-origin:100% 50%;">255.78</div>
<div class="t r" style="left:985.65px;top:117px;line-height:14px;letter-spacing:-0.300px;transform:scaleX(0.914);transform-origin:100% 50%;">254.30</div>
<div class="t r" style="left:666.03px;top:132px;line-height:14px;letter-spacing:-0.300px;transform:scaleX(0.913);transform-origin:100% 50%;">1,500</div>
<div class="t r" style="left:725.65px;top:132px;line-height:14px;letter-spacing:-0.300px;transform:scaleX(0.914);transform-origin:100% 50%;">132.62</div>
<div class="t r" style="left:790.65px;top:132px;line-height:14px;letter-spacing:-0.300px;transform:scaleX(0.914);transform-origin:100% 50%;">192.97</div>
<div class="t r" style="left:855.65px;top:132px;line-height:14px;letter-spacing:-0.300px;transform:scaleX(0.914);transform-origin:100% 50%;">190.86</div>
<div class="t r" style="left:920.65px;top:132px;line-height:14px;letter-spacing:-0.300px;transform:scaleX(0.914);transform-origin:100% 50%;">317.00</div>
<div class="t r" style="left:985.65px;top:132px;line-height:14px;letter-spacing:-0.300px;transform:scaleX(0.914);transform-origin:100% 50%;">314.89</div>
<div class="t r" style="left:666.03px;top:147px;line-height:14px;letter-spacing:-0.300px;transform:scaleX(0.913);transform-origin:100% 50%;">2,000</div>
<div class="t r" style="left:725.65px;top:147px;line-height:14px;letter-spacing:-0.300px;transform:scaleX(0.914);transform-origin:100% 50%;">152.81</div>
<div class="t r" style="left:790.65px;top:147px;line-height:14px;letter-spacing:-0.300px;transform:scaleX(0.914);transform-origin:100% 50%;">224.96</div>
<div class="t r" style="left:855.65px;top:147px;line-height:14px;letter-spacing:-0.300px;transform:scaleX(0.914);transform-origin:100% 50%;">222.24</div>
<div class="t r" style="left:920.65px;top:147px;line-height:14px;letter-spacing:-0.300px;transform:scaleX(0.914);transform-origin:100% 50%;">369.82</div>
<div class="t r" style="left:985.65px;top:147px;line-height:14px;letter-spacing:-0.300px;transform:scaleX(0.914);transform-origin:100% 50%;">367.10</div>
<div class="t r" style="left:666.03px;top:162px;line-height:14px;letter-spacing:-0.300px;transform:scaleX(0.913);transform-origin:100% 50%;">2,500</div>
<div class="t r" style="left:725.65px;top:162px;line-height:14px;letter-spacing:-0.300px;transform:scaleX(0.914);transform-origin:100% 50%;">174.60</div>
<div class="t r" style="left:790.65px;top:162px;line-height:14px;letter-spacing:-0.300px;transform:scaleX(0.914);transform-origin:100% 50%;">259.19</div>
<div class="t r" style="left:855.65px;top:162px;line-height:14px;letter-spacing:-0.300px;transform:scaleX(0.914);transform-origin:100% 50%;">255.85</div>
<div class="t r" style="left:920.65px;top:162px;line-height:14px;letter-spacing:-0.300px;transform:scaleX(0.914);transform-origin:100% 50%;">424.34</div>
<div class="t r" style="left:985.65px;top:162px;line-height:14px;letter-spacing:-0.300px;transform:scaleX(0.914);transform-origin:100% 50%;">421.00</div>
<div class="t r" style="left:666.03px;top:177px;line-height:14px;letter-spacing:-0.300px;transform:scaleX(0.913);transform-origin:100% 50%;">3,000</div>
<div class="t r" style="left:725.65px;top:177px;line-height:14px;letter-spacing:-0.300px;transform:scaleX(0.914);transform-origin:100% 50%;">198.13</div>
<div class="t r" style="left:790.65px;top:177px;line-height:14px;letter-spacing:-0.300px;transform:scaleX(0.914);transform-origin:100% 50%;">295.18</div>
<div class="t r" style="left:855.65px;top:177px;line-height:14px;letter-spacing:-0.300px;transform:scaleX(0.914);transform-origin:100% 50%;">291.23</div>
<div class="t r" style="left:920.65px;top:177px;line-height:14px;letter-spacing:-0.300px;transform:scaleX(0.914);transform-origin:100% 50%;">482.15</div>
<div class="t r" style="left:985.65px;top:177px;line-height:14px;letter-spacing:-0.300px;transform:scaleX(0.914);transform-origin:100% 50%;">478.20</div>
<div class="t r" style="left:666.03px;top:192px;line-height:14px;letter-spacing:-0.300px;transform:scaleX(0.913);transform-origin:100% 50%;">4,000</div>
<div class="t r" style="left:725.65px;top:192px;line-height:14px;letter-spacing:-0.300px;transform:scaleX(0.914);transform-origin:100% 50%;">239.19</div>
<div class="t r" style="left:790.65px;top:192px;line-height:14px;letter-spacing:-0.300px;transform:scaleX(0.914);transform-origin:100% 50%;">357.27</div>
<div class="t r" style="left:855.65px;top:192px;line-height:14px;letter-spacing:-0.300px;transform:scaleX(0.914);transform-origin:100% 50%;">352.08</div>
<div class="t r" style="left:920.65px;top:192px;line-height:14px;letter-spacing:-0.300px;transform:scaleX(0.914);transform-origin:100% 50%;">585.35</div>
<div class="t r" style="left:985.65px;top:192px;line-height:14px;letter-spacing:-0.300px;transform:scaleX(0.914);transform-origin:100% 50%;">580.16</div>
<div class="t r" style="left:666.03px;top:207px;line-height:14px;letter-spacing:-0.300px;transform:scaleX(0.913);transform-origin:100% 50%;">4,500</div>
<div class="t r" style="left:725.65px;top:207px;line-height:14px;letter-spacing:-0.300px;transform:scaleX(0.914);transform-origin:100% 50%;">260.78</div>
<div class="t r" style="left:790.65px;top:207px;line-height:14px;letter-spacing:-0.300px;transform:scaleX(0.914);transform-origin:100% 50%;">389.62</div>
<div class="t r" style="left:855.65px;top:207px;line-height:14px;letter-spacing:-0.300px;transform:scaleX(0.914);transform-origin:100% 50%;">383.81</div>
<div class="t r" style="left:920.65px;top:207px;line-height:14px;letter-spacing:-0.300px;transform:scaleX(0.914);transform-origin:100% 50%;">640.18</div>
<div class="t r" style="left:985.65px;top:207px;line-height:14px;letter-spacing:-0.300px;transform:scaleX(0.914);transform-origin:100% 50%;">634.37</div>
<div class="t r" style="left:666.03px;top:222px;line-height:14px;letter-spacing:-0.300px;transform:scaleX(0.913);transform-origin:100% 50%;">5,500</div>
<div class="t r" style="left:725.65px;top:222px;line-height:14px;letter-spacing:-0.300px;transform:scaleX(0.914);transform-origin:100% 50%;">302.55</div>
<div class="t r" style="left:790.65px;top:222px;line-height:14px;letter-spacing:-0.300px;transform:scaleX(0.914);transform-origin:100% 50%;">449.60</div>
<div class="t r" style="left:855.65px;top:222px;line-height:14px;letter-spacing:-0.300px;transform:scaleX(0.914);transform-origin:100% 50%;">442.56</div>
<div class="t r" style="left:920.65px;top:222px;line-height:14px;letter-spacing:-0.300px;transform:scaleX(0.914);transform-origin:100% 50%;">737.16</div>
<div class="t r" style="left:985.65px;top:222px;line-height:14px;letter-spacing:-0.300px;transform:scaleX(0.914);transform-origin:100% 50%;">730.12</div>
<div class="t r" style="left:666.03px;top:237px;line-height:14px;letter-spacing:-0.300px;transform:scaleX(0.913);transform-origin:100% 50%;">6,500</div>
<div class="t r" style="left:725.65px;top:237px;line-height:14px;letter-spacing:-0.300px;transform:scaleX(0.914);transform-origin:100% 50%;">336.98</div>
<div class="t r" style="left:790.65px;top:237px;line-height:14px;letter-spacing:-0.300px;transform:scaleX(0.914);transform-origin:100% 50%;">498.46</div>
<div class="t r" style="left:855.65px;top:237px;line-height:14px;letter-spacing:-0.300px;transform:scaleX(0.914);transform-origin:100% 50%;">490.18</div>
<div class="t r" style="left:920.65px;top:237px;line-height:14px;letter-spacing:-0.300px;transform:scaleX(0.914);transform-origin:100% 50%;">813.34</div>
<div class="t r" style="left:985.65px;top:237px;line-height:14px;letter-spacing:-0.300px;transform:scaleX(0.914);transform-origin:100% 50%;">805.06</div>
<div class="t r" style="left:666.03px;top:252px;line-height:14px;letter-spacing:-0.300px;transform:scaleX(0.913);transform-origin:100% 50%;">7,500</div>
<div class="t r" style="left:725.65px;top:252px;line-height:14px;letter-spacing:-0.300px;transform:scaleX(0.914);transform-origin:100% 50%;">369.72</div>
<div class="t r" style="left:790.65px;top:252px;line-height:14px;letter-spacing:-0.300px;transform:scaleX(0.914);transform-origin:100% 50%;">544.30</div>
<div class="t r" style="left:855.65px;top:252px;line-height:14px;letter-spacing:-0.300px;transform:scaleX(0.914);transform-origin:100% 50%;">534.79</div>
<div class="t r" style="left:920.65px;top:252px;line-height:14px;letter-spacing:-0.300px;transform:scaleX(0.914);transform-origin:100% 50%;">887.07</div>
<div class="t r" style="left:985.65px;top:252px;line-height:14px;letter-spacing:-0.300px;transform:scaleX(0.914);transform-origin:100% 50%;">877.56</div>
<div class="t r" style="left:666.03px;top:267px;line-height:14px;letter-spacing:-0.300px;transform:scaleX(0.913);transform-origin:100% 50%;">8,500</div>
<div class="t r" style="left:725.65px;top:267px;line-height:14px;letter-spacing:-0.300px;transform:scaleX(0.914);transform-origin:100% 50%;">405.67</div>
<div class="t r" style="left:790.65px;top:267px;line-height:14px;letter-spacing:-0.300px;transform:scaleX(0.914);transform-origin:100% 50%;">594.70</div>
<div class="t r" style="left:855.65px;top:267px;line-height:14px;letter-spacing:-0.300px;transform:scaleX(0.914);transform-origin:100% 50%;">583.95</div>
<div class="t r" style="left:920.65px;top:267px;line-height:14px;letter-spacing:-0.300px;transform:scaleX(0.914);transform-origin:100% 50%;">966.18</div>
<div class="t r" style="left:985.65px;top:267px;line-height:14px;letter-spacing:-0.300px;transform:scaleX(0.914);transform-origin:100% 50%;">955.43</div>
<div class="t r" style="left:660.65px;top:282px;line-height:14px;letter-spacing:-0.300px;transform:scaleX(0.914);transform-origin:100% 50%;">10,000</div>
<div class="t r" style="left:725.65px;top:282px;line-height:14px;letter-spacing:-0.300px;transform:scaleX(0.914);transform-origin:100% 50%;">453.14</div>
<div class="t r" style="left:791.41px;top:282px;line-height:14px;letter-spacing:-0.300px;transform:scaleX(0.939);transform-origin:100% 50%;">662.11</div>
<div class="t r" style="left:855.65px;top:282px;line-height:14px;letter-spacing:-0.300px;transform:scaleX(0.914);transform-origin:100% 50%;">649.51</div>
<div class="t r" style="left:912.77px;top:282px;line-height:14px;letter-spacing:-0.300px;transform:scaleX(0.912);transform-origin:100% 50%;">1,073.45</div>
<div class="t r" style="left:977.77px;top:282px;line-height:14px;letter-spacing:-0.300px;transform:scaleX(0.912);transform-origin:100% 50%;">1,060.85</div>
<div class="t r" style="left:661.41px;top:297px;line-height:14px;letter-spacing:-0.300px;transform:scaleX(0.939);transform-origin:100% 50%;">11,000</div>
<div class="t r" style="left:725.65px;top:297px;line-height:14px;letter-spacing:-0.300px;transform:scaleX(0.914);transform-origin:100% 50%;">491.73</div>
<div class="t r" style="left:790.65px;top:297px;line-height:14px;letter-spacing:-0.300px;transform:scaleX(0.914);transform-origin:100% 50%;">717.08</div>
<div class="t r" style="left:855.65px;top:297px;line-height:14px;letter-spacing:-0.300px;transform:scaleX(0.914);transform-origin:100% 50%;">703.24</div>
<div class="t r" style="left:912.77px;top:297px;line-height:14px;letter-spacing:-0.300px;transform:scaleX(0.912);transform-origin:100% 50%;">1,162.86</div>
<div class="t r" style="left:977.77px;top:297px;line-height:14px;letter-spacing:-0.300px;transform:scaleX(0.912);transform-origin:100% 50%;">1,149.02</div>
<div class="t r" style="left:660.65px;top:312px;line-height:14px;letter-spacing:-0.300px;transform:scaleX(0.914);transform-origin:100% 50%;">12,500</div>
<div class="t r" style="left:725.65px;top:312px;line-height:14px;letter-spacing:-0.300px;transform:scaleX(0.914);transform-origin:100% 50%;">557.42</div>
<div class="t r" style="left:790.65px;top:312px;line-height:14px;letter-spacing:-0.300px;transform:scaleX(0.914);transform-origin:100% 50%;">818.64</div>
<div class="t r" style="left:855.65px;top:312px;line-height:14px;letter-spacing:-0.300px;transform:scaleX(0.914);transform-origin:100% 50%;">802.94</div>
<div class="t r" style="left:912.77px;top:312px;line-height:14px;letter-spacing:-0.300px;transform:scaleX(0.912);transform-origin:100% 50%;">1,339.36</div>
<div class="t r" style="left:977.77px;top:312px;line-height:14px;letter-spacing:-0.300px;transform:scaleX(0.912);transform-origin:100% 50%;">1,323.66</div>
<div class="t b" style="left:640.59px;top:330px;line-height:14px;letter-spacing:0.389px;">Min Profit</div>
<div class="t r" style="left:727.23px;top:330px;line-height:14px;letter-spacing:-0.280px;">20.0%</div>
<div class="t r" style="left:792.23px;top:330px;line-height:14px;letter-spacing:-0.280px;">20.0%</div>
<div class="t r" style="left:857.23px;top:330px;line-height:14px;letter-spacing:-0.280px;">20.0%</div>
<div class="t r" style="left:922.23px;top:330px;line-height:14px;letter-spacing:-0.280px;">20.0%</div>
<div class="t r" style="left:987.23px;top:330px;line-height:14px;letter-spacing:-0.280px;">20.0%</div>
<div class="t b" style="left:637.67px;top:345px;line-height:14px;letter-spacing:0.466px;">Max Profit</div>
<div class="t r" style="left:727.23px;top:345px;line-height:14px;letter-spacing:-0.280px;">23.0%</div>
<div class="t r" style="left:792.23px;top:345px;line-height:14px;letter-spacing:-0.280px;">22.0%</div>
<div class="t r" style="left:857.23px;top:345px;line-height:14px;letter-spacing:-0.280px;">22.0%</div>
<div class="t r" style="left:922.23px;top:345px;line-height:14px;letter-spacing:-0.280px;">21.0%</div>
<div class="t r" style="left:987.23px;top:345px;line-height:14px;letter-spacing:-0.280px;">21.0%</div>
<div class="t b" style="left:639.56px;top:360px;line-height:14px;letter-spacing:0.358px;">Avg Profit</div>
<div class="t r" style="left:727.23px;top:360px;line-height:14px;letter-spacing:-0.280px;">22.0%</div>
<div class="t r" style="left:792.23px;top:360px;line-height:14px;letter-spacing:-0.280px;">22.0%</div>
<div class="t r" style="left:857.23px;top:360px;line-height:14px;letter-spacing:-0.280px;">22.0%</div>
<div class="t r" style="left:922.23px;top:360px;line-height:14px;letter-spacing:-0.280px;">21.0%</div>
<div class="t r" style="left:987.23px;top:360px;line-height:14px;letter-spacing:-0.280px;">21.0%</div>
<div class="t r" style="left:637.50px;top:389px;line-height:14px;letter-spacing:-0.318px;">Press:  1C: 11"  Text: Uncoated</div>
<div class="t r" style="left:637.50px;top:400px;line-height:14px;letter-spacing:-0.301px;">Stock:  20# Domtar Copy   White</div>
<div class="t r" style="left:637.50px;top:411px;line-height:14px;letter-spacing:-0.300px;transform:scaleX(0.949);transform-origin:0 50%;">Labor Rate:  92.22</div>
<div class="t r" style="left:637.50px;top:422px;line-height:14px;letter-spacing:-0.300px;transform:scaleX(0.959);transform-origin:0 50%;">Labor Markup:  1.25</div>
<div class="t r" style="left:757.50px;top:411px;line-height:14px;letter-spacing:-0.341px;">Charges: Preflight Files for 1 Color</div>
<div class="t r" style="left:757.50px;top:422px;line-height:14px;letter-spacing:-0.375px;">Press, Nuvera B&amp;W Proof, 8.5 x 11,</div>
<div class="t r" style="left:757.50px;top:433px;line-height:14px;letter-spacing:-0.348px;">Email / Web PDF Proof, Parent to</div>
<div class="t r" style="left:757.50px;top:444px;line-height:14px;letter-spacing:-0.203px;">Run Cut: Std for All, Ink Coverage</div>
<div class="t r" style="left:757.50px;top:455px;line-height:14px;letter-spacing:-0.427px;">(Standard Black or Standard Color),</div>
<div class="t r" style="left:757.50px;top:466px;line-height:14px;letter-spacing:-0.353px;">Agfa Setprint Poly Plates, Letterhead</div>
<div class="t r" style="left:757.50px;top:477px;line-height:14px;letter-spacing:-0.300px;transform:scaleX(0.951);transform-origin:0 50%;">Boxes 1000 per box &amp; Handling</div>
<div class="t r" style="left:757.50px;top:488px;line-height:14px;letter-spacing:-0.201px;">(*Default*), Corrugated Carton</div>
<div class="t r" style="left:757.50px;top:499px;line-height:14px;letter-spacing:-0.266px;">(Generic) &amp; Handling (*Default*),</div>
<div class="t r" style="left:757.50px;top:510px;line-height:14px;letter-spacing:-0.400px;">Deliver How??? (Misc. Cat.)</div>
<div class="cb" style="left:932px;top:388px;width:13px;height:13px;"></div>
<div class="t r" style="left:947.00px;top:389px;line-height:14px;letter-spacing:0.019px;">Ignore Charges</div>
<div class="cb" style="left:932px;top:407px;width:13px;height:13px;"></div>
<div class="t r" style="left:947.00px;top:408px;line-height:14px;letter-spacing:-0.175px;">Use press count</div>
<div class="cb" style="left:932px;top:426px;width:13px;height:13px;"></div>
<div class="t r" style="left:947.00px;top:427px;line-height:14px;letter-spacing:0.021px;">Ignore Washup Charges</div>
<div class="cb" style="left:932px;top:445px;width:13px;height:13px;"></div>
<div class="t r" style="left:947.00px;top:446px;line-height:14px;letter-spacing:0.150px;">Ignore Stock</div>
<div style="left:1038px;top:41px;width:190px;height:135px;border:1px solid #6a6a64"></div>
<div class="t bi" style="left:1045.00px;top:43px;line-height:14px;letter-spacing:0.183px;">Variance From Standards</div>
<div style="left:1048px;top:57px;width:1px;height:112px;background:#000"></div>
<div style="left:1048px;top:112px;width:171px;height:1px;background:#22a0e6"></div>
<div style="left:1038px;top:188px;width:190px;height:134px;border:1px solid #6a6a64"></div>
<div class="t b" style="left:1043.00px;top:190px;line-height:14px;letter-spacing:0.223px;">Profit Analysis</div>
<div style="left:1048px;top:204px;width:1px;height:113px;background:#000"></div>
<svg style="left:0;top:0" width="1285" height="586"><path d="M1048.6 297.3 L1055.3 296.1 L1061.3 294.4 L1070.8 289.7 L1082.8 282.5 L1094.7 275.3 L1106.7 268.6 L1118.6 261.5 L1130.6 255.5 L1142.5 250.0 L1154.5 244.7 L1166.4 239.5 L1178.4 234.5 L1190.3 228.5 L1202.3 222.0 L1210.6 217.7 L1218.5 213.2 L1218.5 236.4 L1210.6 240.0 L1202.3 243.5 L1190.3 247.8 L1178.4 251.9 L1166.4 256.2 L1154.5 260.3 L1142.5 265.0 L1130.6 268.6 L1118.6 273.4 L1106.7 278.9 L1094.7 284.2 L1082.8 289.4 L1070.8 295.4 L1061.3 299.7 L1055.3 301.4 L1048.6 302.6Z" fill="#108020" stroke="#000" stroke-width="0.9" stroke-linejoin="round"/><path d="M1048.6 302.6 L1055.3 301.4 L1061.3 299.7 L1070.8 295.4 L1082.8 289.4 L1094.7 284.2 L1106.7 278.9 L1118.6 273.4 L1130.6 268.6 L1142.5 265.0 L1154.5 260.3 L1166.4 256.2 L1178.4 251.9 L1190.3 247.8 L1202.3 243.5 L1210.6 240.0 L1218.5 236.4 L1218.5 257.4 L1210.6 259.3 L1202.3 261.5 L1190.3 265.0 L1178.4 267.9 L1166.4 271.0 L1154.5 274.6 L1142.5 278.7 L1130.6 282.5 L1118.6 286.6 L1106.7 291.3 L1094.7 295.4 L1082.8 299.7 L1070.8 304.5 L1061.3 308.5 L1055.3 309.5 L1048.6 309.7Z" fill="#1ca6ee" stroke="#000" stroke-width="0.9" stroke-linejoin="round"/><path d="M1048.6 309.7 L1055.3 309.5 L1061.3 308.5 L1070.8 304.5 L1082.8 299.7 L1094.7 295.4 L1106.7 291.3 L1118.6 286.6 L1130.6 282.5 L1142.5 278.7 L1154.5 274.6 L1166.4 271.0 L1178.4 267.9 L1190.3 265.0 L1202.3 261.5 L1210.6 259.3 L1218.5 257.4 L1218.5 283.0 L1210.6 283.9 L1202.3 284.9 L1190.3 286.1 L1178.4 287.7 L1166.4 289.4 L1154.5 291.3 L1142.5 293.0 L1130.6 294.4 L1118.6 296.6 L1106.7 299.0 L1094.7 301.6 L1082.8 304.5 L1070.8 307.6 L1061.3 309.7 L1055.3 310.2 L1048.6 310.4Z" fill="#ec1688" stroke="#000" stroke-width="0.9" stroke-linejoin="round"/><path d="M1048.6 310.4 L1055.3 310.2 L1061.3 309.7 L1070.8 307.6 L1082.8 304.5 L1094.7 301.6 L1106.7 299.0 L1118.6 296.6 L1130.6 294.4 L1142.5 293.0 L1154.5 291.3 L1166.4 289.4 L1178.4 287.7 L1190.3 286.1 L1202.3 284.9 L1210.6 283.9 L1218.5 283.0 L1218.5 316.4 L1048.6 316.4Z" fill="#d8100c" stroke="#000" stroke-width="0.9" stroke-linejoin="round"/></svg>
<div style="left:1038px;top:335px;width:190px;height:53px;border:solid #111;border-width:1px 2px 2px 1px"></div>
<div class="t b" style="left:1104.15px;top:337px;line-height:14px;letter-spacing:0.297px;">-- Legend --</div>
<div style="left:1048px;top:352px;width:20px;height:11px;background:#d8100c;border:1px solid #000;box-shadow:1px 1px 0 #555"></div>
<div class="t b" style="left:1074.00px;top:352px;line-height:14px;letter-spacing:0.144px;">Labor</div>
<div style="left:1138px;top:352px;width:20px;height:11px;background:#1ca6ee;border:1px solid #000;box-shadow:1px 1px 0 #555"></div>
<div class="t b" style="left:1163.00px;top:352px;line-height:14px;letter-spacing:0.141px;">Charges</div>
<div style="left:1048px;top:368px;width:20px;height:11px;background:#ec1688;border:1px solid #000;box-shadow:1px 1px 0 #555"></div>
<div class="t b" style="left:1074.00px;top:368px;line-height:14px;letter-spacing:-0.047px;">Stock</div>
<div style="left:1138px;top:368px;width:20px;height:11px;background:#108020;border:1px solid #000;box-shadow:1px 1px 0 #555"></div>
<div class="t b" style="left:1163.00px;top:368px;line-height:14px;letter-spacing:0.398px;">Profit</div>
</body></html>
